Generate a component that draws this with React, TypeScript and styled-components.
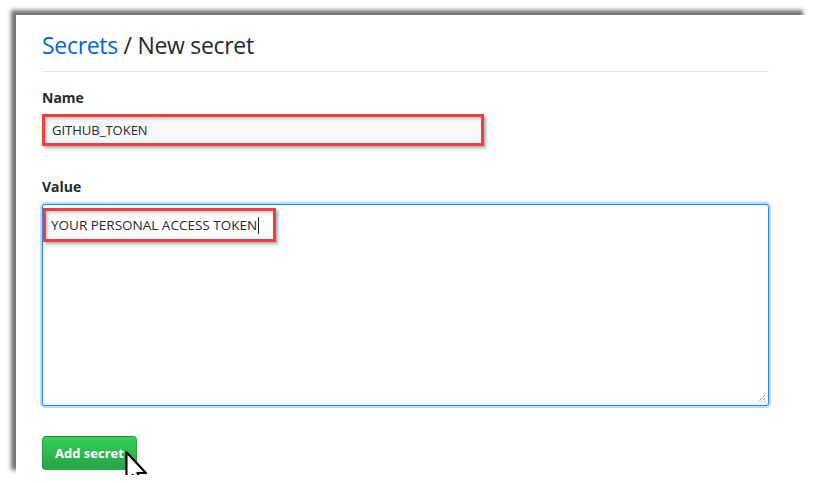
import React from 'react';
import styled, { createGlobalStyle } from 'styled-components';

const GlobalStyle = createGlobalStyle`
  html, body {
    margin: 0;
    padding: 0;
    background: #ffffff;
    overflow: hidden;
  }
  body {
    font-family: 'Open Sans', 'Noto Sans', sans-serif;
    color: #24292e;
  }
`;

const Page = styled.div`
  position: relative;
  margin: 15px 0 0 16px;
  width: 792px;
  height: 460px;
  background: #ffffff;
  box-shadow: -5px -5px 4px rgba(0, 0, 0, 0.55);
  padding: 15px 39px 0 26px;
  box-sizing: border-box;
`;

const Header = styled.div`
  padding-bottom: 11px;
  border-bottom: 1px solid #e1e4e8;
`;

const Title = styled.h2`
  margin: 0;
  font-size: 23px;
  line-height: 30px;
  letter-spacing: -0.3px;
  font-weight: 400;
  color: #24292e;

  a {
    color: #0366d6;
    text-decoration: none;
  }
`;

const Form = styled.div`
  display: flex;
  flex-direction: column;
  align-items: flex-start;
`;

const Label = styled.label<{ $top: number }>`
  margin-top: ${(p) => p.$top}px;
  font-size: 14px;
  line-height: 20px;
  font-weight: 700;
`;

const Marked = styled.div`
  box-sizing: border-box;
  border: 3px solid #ef3d42;
  box-shadow: 2px 2px 3px rgba(0, 0, 0, 0.35), inset 2px 2px 3px rgba(0, 0, 0, 0.22);
  color: #24292e;
  display: flex;
  align-items: center;
`;

const NameInput = styled(Marked)`
  margin-top: 6px;
  width: 442px;
  height: 32px;
  padding-left: 7px;
  font-size: 13px;
  background: #f6f8fa;
`;

const ValueBox = styled.div`
  position: relative;
  margin-top: 7px;
  box-sizing: border-box;
  width: 727px;
  height: 202px;
  border: 1px solid #2188ff;
  border-radius: 3px;
  background: #ffffff;
  box-shadow: 0 0 0 2px rgba(3, 102, 214, 0.25);
  padding: 3px 0 0 0;
`;

const ValueMark = styled(Marked)`
  width: 233px;
  height: 34px;
  padding-left: 5px;
  font-size: 13.5px;
  background: #ffffff;
`;

const Caret = styled.span`
  display: inline-block;
  width: 1px;
  height: 17px;
  margin-left: 1px;
  background: #24292e;
`;

const Grip = styled.svg`
  position: absolute;
  right: 2px;
  bottom: 2px;
`;

const Button = styled.button`
  margin-top: 30px;
  position: relative;
  height: 34px;
  padding: 0 12px;
  border: 1px solid rgba(27, 31, 35, 0.2);
  border-radius: 4px;
  background: linear-gradient(-180deg, #34d058 0%, #28a745 90%);
  color: #ffffff;
  font-family: 'Open Sans', 'Noto Sans', sans-serif;
  font-size: 13px;
  font-weight: 700;
  cursor: default;
`;

const Pointer = styled.svg`
  position: absolute;
  left: 82px;
  top: 14px;
`;

export default function App() {
  return (
    <>
      <GlobalStyle />
      <Page>
        <Header>
          <Title>
            <a href="#">Secrets</a> / New secret
          </Title>
        </Header>
        <Form>
          <Label $top={16}>Name</Label>
          <NameInput>GITHUB_TOKEN</NameInput>
          <Label $top={31}>Value</Label>
          <ValueBox>
            <ValueMark>
              YOUR PERSONAL ACCESS TOKEN
              <Caret />
            </ValueMark>
            <Grip width="10" height="10" viewBox="0 0 10 10">
              <path d="M9 2 L2 9 M9 5 L5 9 M9 8 L8 9" stroke="#666" strokeWidth="1" strokeDasharray="1 1" />
            </Grip>
          </ValueBox>
          <Button>
            Add secret
            <Pointer width="23" height="36" viewBox="0 0 12 19">
              <path
                d="M0.7 0.7 L0.7 15.8 L4 12.6 L6.4 18.2 L8.9 17.1 L6.5 11.6 L11 11.6 Z"
                fill="#ffffff"
                stroke="#000000"
                strokeWidth="1.1"
                strokeLinejoin="round"
              />
            </Pointer>
          </Button>
        </Form>
      </Page>
    </>
  );
}
